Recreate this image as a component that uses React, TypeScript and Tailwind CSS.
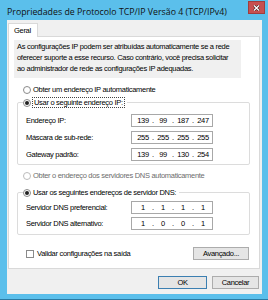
import React from 'react';

const Radio = ({ checked = false, disabled = false }: { checked?: boolean; disabled?: boolean }) => (
    <span
        className={`w-[8px] h-[8px] shrink-0 rounded-full border flex items-center justify-center bg-white ${
            disabled ? 'border-[#bcbcbc]' : 'border-[#8a8a8a]'
        }`}
    >
        {checked && <span className="w-[4px] h-[4px] rounded-full bg-[#222]" />}
    </span>
);

const IpBox = ({ parts }: { parts: string[] }) => (
    <div className="w-[82px] h-[13px] border border-[#a8a8a8] bg-white flex items-center pl-[3px] leading-none">
        {parts.map((p, i) => (
            <React.Fragment key={i}>
                {i > 0 && <span className="w-[4px] text-center">.</span>}
                <span className="w-[16px] text-center">{p}</span>
            </React.Fragment>
        ))}
    </div>
);

const Field = ({ label, parts }: { label: string; parts: string[] }) => (
    <div className="flex items-center h-[13px]">
        <span className="w-[113px] pl-[8px]">{label}</span>
        <IpBox parts={parts} />
    </div>
);

const Button = ({ label, primary = false, width }: { label: string; primary?: boolean; width: string }) => (
    <div
        className={`${width} h-[13px] flex items-center justify-center border bg-[#e5e5e5] ${
            primary ? 'border-[#3c7fb1]' : 'border-[#acacac]'
        }`}
    >
        {label}
    </div>
);

export default function App() {
    return (
        <div className="w-[268px] h-[300px] bg-[#5bbfeb] flex flex-col font-['Liberation_Sans',Arial,sans-serif] text-[7.5px] leading-[11px] tracking-[-0.3px] text-black overflow-hidden whitespace-nowrap">
            {/* Title bar */}
            <div className="h-[20px] flex items-start">
                <span className="pl-[7px] pt-[6px] text-[8.8px] leading-[12px] tracking-[0px] font-['Open_Sans',sans-serif] text-[#111]">
                    Propriedades de Protocolo TCP/IP Versão 4 (TCP/IPv4)
                </span>
                <div className="ml-auto mt-[1px] mr-[3px] w-[17px] h-[13px] bg-[#c75050] border border-[#a13d3d] flex items-center justify-center">
                    <svg width="7" height="6" viewBox="0 0 7 6">
                        <path d="M1 0.5 L6 5.5 M6 0.5 L1 5.5" stroke="#3a1010" strokeWidth="2.4" />
                        <path d="M1 0.5 L6 5.5 M6 0.5 L1 5.5" stroke="#fff" strokeWidth="1.4" />
                    </svg>
                </div>
            </div>

            {/* Body */}
            <div className="ml-[7px] mr-[6px] h-[274px] bg-[#f0f0f0] flex flex-col">
                {/* Tabs */}
                <div className="pt-[3px] pl-[1px] flex">
                    <div className="relative z-10 -mb-px w-[30px] h-[14px] bg-white border border-b-0 border-[#d9d9d9] pl-[5px] pt-[1px]">
                        Geral
                    </div>
                </div>

                {/* Panel */}
                <div className="ml-[1px] mr-[2px] h-[233px] bg-white border border-[#d9d9d9] flex flex-col">
                    <div className="ml-[5px] mt-[3px] w-[227px] h-[38px] bg-[#f0f0f0] pl-[3px] pt-[1px]">
                        <p>As configurações IP podem ser atribuídas automaticamente se a rede</p>
                        <p>oferecer suporte a esse recurso. Caso contrário, você precisa solicitar</p>
                        <p>ao administrador de rede as configurações IP adequadas.</p>
                    </div>

                    <div className="mt-[6px] ml-[14px] flex items-center gap-[2px] h-[11px]">
                        <Radio />
                        <span>Obter um endereço IP automaticamente</span>
                    </div>

                    {/* IP group */}
                    <div className="mt-[7px] ml-[8px] w-[233px] h-[63px] border border-[#dcdcdc] rounded-[2px] flex flex-col">
                        <div className="-mt-[6px] ml-[5px] w-fit bg-white flex items-center gap-[1px] h-[11px] pr-[2px]">
                            <Radio checked />
                            <span className="border border-dotted border-[#444] px-[1px] leading-[9px]">
                                Usar o seguinte endereço IP:
                            </span>
                        </div>
                        <div className="mt-[6px] flex flex-col gap-[4px]">
                            <Field label="Endereço IP:" parts={['139', '99', '187', '247']} />
                            <Field label="Máscara de sub-rede:" parts={['255', '255', '255', '255']} />
                            <Field label="Gateway padrão:" parts={['139', '99', '130', '254']} />
                        </div>
                    </div>

                    <div className="mt-[5px] ml-[14px] flex items-center gap-[2px] h-[11px] text-[#6d6d6d]">
                        <Radio disabled />
                        <span>Obter o endereço dos servidores DNS automaticamente</span>
                    </div>

                    {/* DNS group */}
                    <div className="mt-[11px] ml-[8px] w-[233px] h-[43px] border border-[#dcdcdc] rounded-[2px] flex flex-col">
                        <div className="-mt-[6px] ml-[5px] w-fit bg-white flex items-center gap-[2px] h-[11px] pr-[3px]">
                            <Radio checked />
                            <span>Usar os seguintes endereços de servidor DNS:</span>
                        </div>
                        <div className="mt-[3px] flex flex-col gap-[3px]">
                            <Field label="Servidor DNS preferencial:" parts={['1', '1', '1', '1']} />
                            <Field label="Servidor DNS alternativo:" parts={['1', '0', '0', '1']} />
                        </div>
                    </div>

                    <div className="mt-[12px] ml-[17px] mr-[10px] flex items-center">
                        <span className="w-[8px] h-[8px] border border-[#8a8a8a] bg-white" />
                        <span className="ml-[3px]">Validar configurações na saída</span>
                        <div className="ml-auto">
                            <Button label="Avançado..." width="w-[56px]" />
                        </div>
                    </div>
                </div>

                {/* Footer buttons */}
                <div className="mt-[7px] flex justify-end gap-[5px] mr-[3px]">
                    <Button label="OK" primary width="w-[49px]" />
                    <Button label="Cancelar" width="w-[47px]" />
                </div>
            </div>

            {/* Bottom frame */}
            <div className="flex-1 flex flex-col justify-end">
                <div className="h-[1px] bg-[#2a7aa3]" />
            </div>
        </div>
    );
}
